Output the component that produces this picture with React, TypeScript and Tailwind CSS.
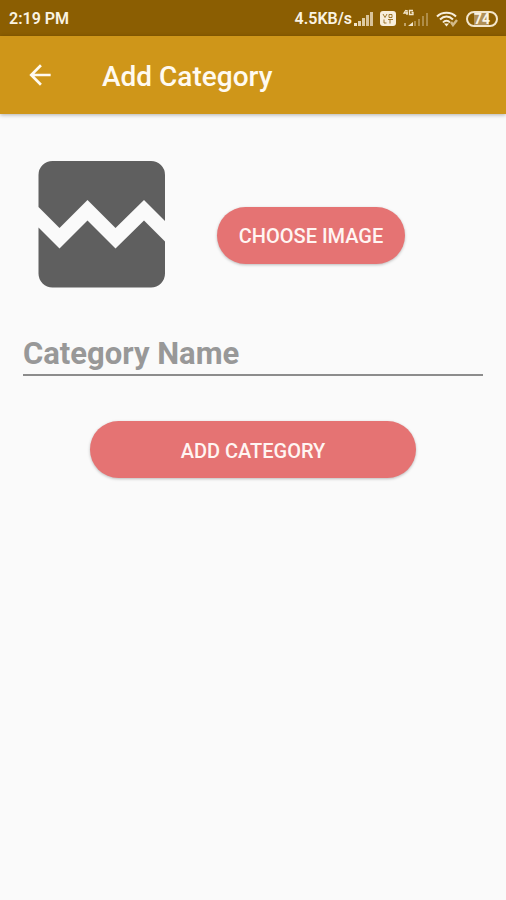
import React, { useState } from 'react';

const SignalIcon = () => (
  <svg className="w-5 h-4" viewBox="0 0 20 16" fill="#f3e6cc" aria-hidden="true">
    <rect x="0" y="12" width="3" height="3" />
    <rect x="4" y="10" width="3" height="5" opacity="0.85" />
    <rect x="8" y="7" width="3" height="8" opacity="0.8" />
    <rect x="12" y="4" width="3" height="11" opacity="0.75" />
    <rect x="16" y="1" width="3" height="14" opacity="0.75" />
  </svg>
);

const VolteIcon = () => (
  <svg className="w-4 h-4" viewBox="0 0 16 16" aria-hidden="true">
    <rect x="0" y="0" width="16" height="15" rx="3" fill="#f8efdc" />
    <path
      d="M3 3l2 3.500 2-3.500M9 3.500h3v3H9zM4 8.500V12h2.500M8 8.500h5M10 8.500v4"
      fill="none"
      stroke="#8b5e05"
      strokeWidth="1"
      opacity="0.8"
    />
  </svg>
);

const MobileDataIcon = () => (
  <svg className="w-7 h-5" viewBox="0 0 28 20" aria-hidden="true">
    <path d="M4 1L2 4h4M5 1v5M11 1.500H7.500v4H11v-2H9.500" fill="none" stroke="#f3e6cc" strokeWidth="1.300" />
    <g fill="#f3e6cc">
      <rect x="2" y="14" width="2" height="3" opacity="0.5" />
      <path d="M6 17l5-4v4z" />
      <rect x="12" y="12" width="2" height="5" opacity="0.35" />
      <rect x="16" y="10" width="2" height="7" opacity="0.35" />
      <rect x="20" y="7" width="2" height="10" opacity="0.35" />
      <rect x="24" y="4" width="2" height="13" opacity="0.35" />
    </g>
  </svg>
);

const WifiIcon = () => (
  <svg className="w-6 h-4" viewBox="0 0 24 16" fill="none" aria-hidden="true">
    <g stroke="#f8efdc" strokeWidth="2">
      <path d="M1 5.500C6 0.500 15 0.500 20 5.500" />
      <path d="M4 8.500C8 4.500 13 4.500 17 8.500" />
      <path d="M7 11.500C9 9 12 9 14 11.500" />
    </g>
    <path d="M8 12.500L10.500 15.500 13 12.500z" fill="#f8efdc" />
    <path d="M15 11l2 3 4-5" stroke="#d2b988" strokeWidth="2.500" />
  </svg>
);

const BrokenImageIcon = () => (
  <svg className="w-32 h-32 shrink-0" viewBox="0 0 128 128" fill="#5f5f5f" role="img" aria-label="Category image">
    <path d="M0.500 15a14 14 0 0 1 14-14h98.500a14 14 0 0 1 14 14v46L106 40 77.500 68 49.500 40 21.500 68 0.500 47z" />
    <path d="M0.500 67.500L21.500 88.500 49.500 60.500 77.500 88.500 106 60.500 127 81.500v32a14 14 0 0 1-14 14H14.500a14 14 0 0 1-14-14z" />
  </svg>
);

const StatusBar = () => (
  <div className="h-9 pl-[9px] pr-2 pt-0.5 flex items-center justify-between bg-[#8b5e02] text-[#faf3e3] text-base font-semibold">
    <span>2:19 PM</span>
    <div className="flex items-center">
      <span>4.5KB/s</span>
      <div className="ml-0.5 flex items-center gap-1.5">
        <SignalIcon />
        <VolteIcon />
        <MobileDataIcon />
        <WifiIcon />
        <div className="w-8 h-4 rounded-full border-2 border-[#f3e6cc] bg-[linear-gradient(90deg,#8b5e02_20%,#b09058_20%,#b09058_74%,#8b5e02_74%)] flex items-center justify-center text-sm leading-4 font-bold">
          74
        </div>
      </div>
    </div>
  </div>
);

export default function App() {
  const [name, setName] = useState('');

  return (
    <div className="min-h-screen bg-[#fafafa] font-[Roboto,sans-serif]">
      <StatusBar />

      <header className="h-[78px] px-6 flex items-center gap-[46px] bg-[#cf9619] text-[#fffaf0] shadow-[0_1px_4px_rgba(0,0,0,0.3)]">
        <button type="button" aria-label="Back" className="w-8 h-8 shrink-0">
          <svg className="w-8 h-8" viewBox="0 0 24 24" fill="currentColor" aria-hidden="true">
            <path d="M20 11H7.830l5.590-5.590L12 4l-8 8 8 8 1.410-1.410L7.830 13H20v-2z" />
          </svg>
        </button>
        <h1 className="pt-1 text-[28px] leading-8 font-medium">Add Category</h1>
      </header>

      <main className="px-[23px] pt-[46px]">
        <div className="pl-[15px] flex items-center gap-[51px]">
          <BrokenImageIcon />
          <button
            type="button"
            className="w-[188px] h-[57px] pt-0.5 mt-[22px] rounded-full bg-[#e57373] text-[#fff5f2] text-[20px] leading-6 font-medium shadow-[0_1px_3px_rgba(0,0,0,0.25)]"
          >
            CHOOSE IMAGE
          </button>
        </div>

        <input
          type="text"
          aria-label="Category Name"
          placeholder="Category Name"
          value={name}
          onChange={(e) => setName(e.target.value)}
          className="block w-full h-12 pt-1 mt-10 border-b-2 border-[#8c8c8c] bg-transparent text-[31px] font-bold text-[#333333] placeholder:text-[#989898] outline-none"
        />

        <div className="px-[67px] mt-[45px]">
          <button
            type="button"
            className="w-full h-[57px] pt-0.5 rounded-full bg-[#e57373] text-[#fff5f2] text-[20px] leading-6 font-medium shadow-[0_1px_3px_rgba(0,0,0,0.25)]"
          >
            ADD CATEGORY
          </button>
        </div>
      </main>
    </div>
  );
}
